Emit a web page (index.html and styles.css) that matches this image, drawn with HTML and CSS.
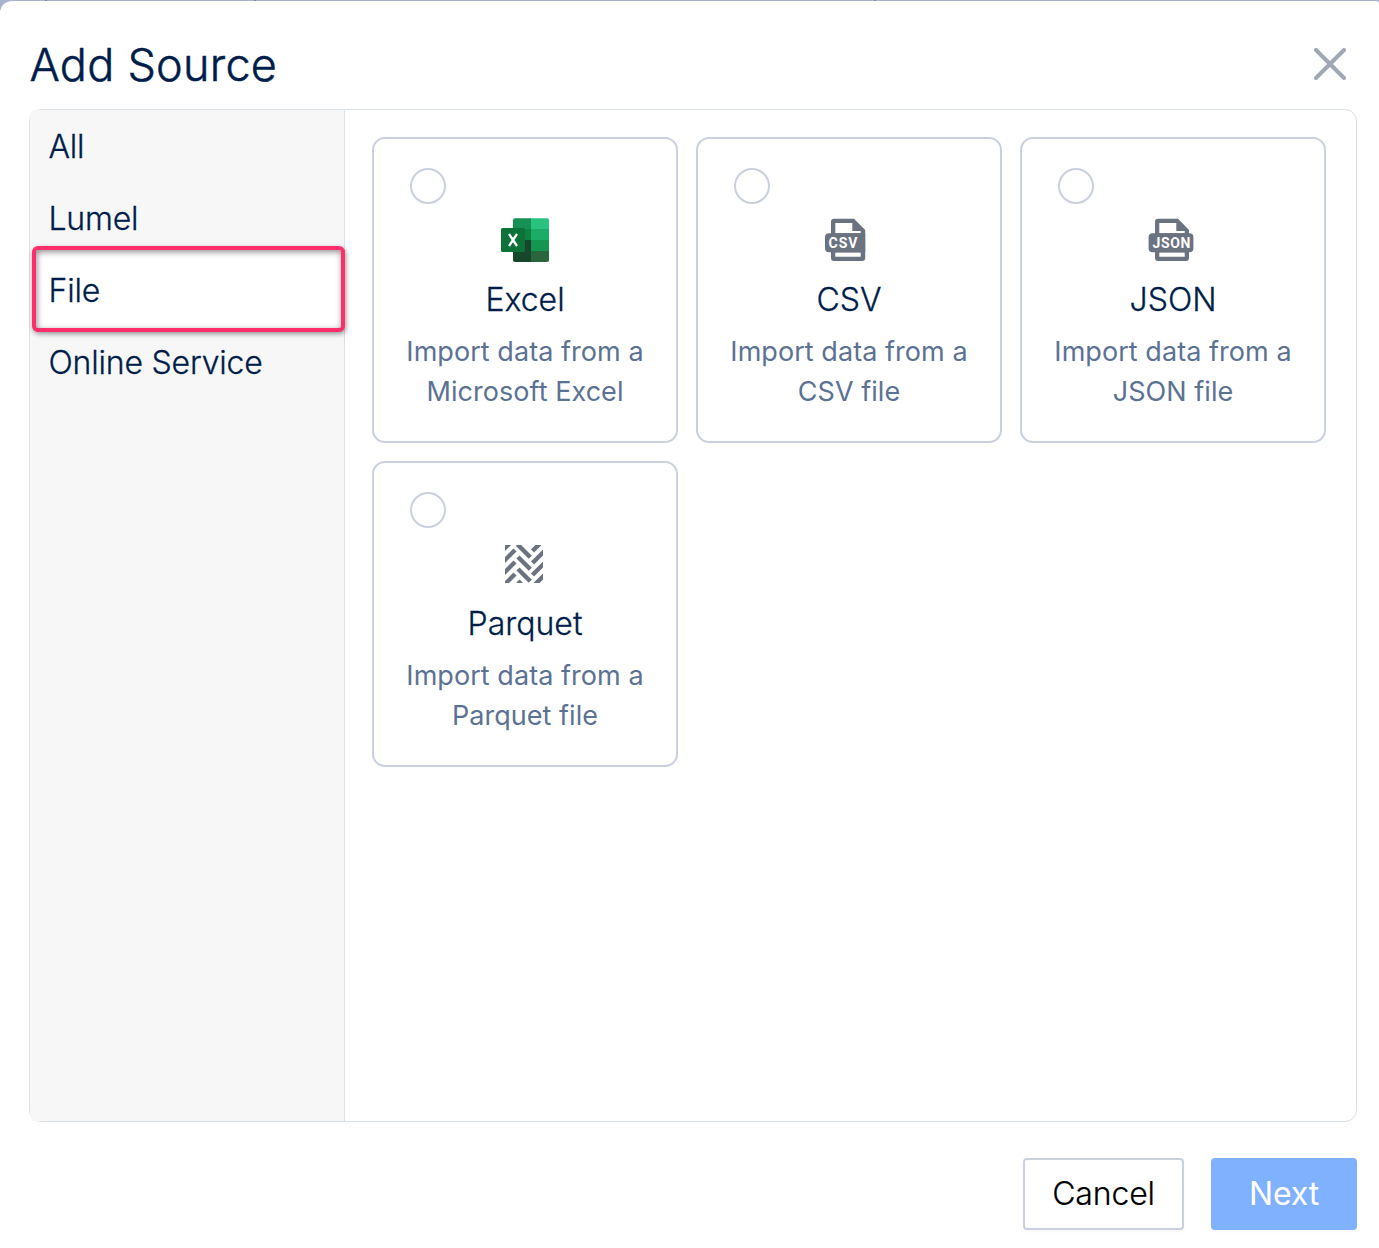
FILE: index.html
```html
<!DOCTYPE html>
<html lang="en">
<head>
<meta charset="utf-8">
<title>Add Source</title>
<link rel="stylesheet" href="styles.css">
</head>
<body>
<main class="dialog">
  <header class="dialog-header">
    <h1 class="title">Add Source</h1>
    <button class="close" aria-label="Close">
      <svg width="32" height="32" viewBox="0 0 32 32"><path d="M2 2 30 30M30 2 2 30" fill="none" stroke="#a0a7b5" stroke-width="4" stroke-linecap="round"/></svg>
    </button>
  </header>
  <section class="panel">
    <nav class="sidebar">
      <a class="nav-item">All</a>
      <a class="nav-item">Lumel</a>
      <a class="nav-item selected">File</a>
      <a class="nav-item">Online Service</a>
    </nav>
    <div class="cards">
      <article class="card">
        <span class="radio"></span>
        <svg class="icon" width="48" height="48" viewBox="0 0 48 48">
          <defs><clipPath id="sheet"><rect x="12" y="2.300" width="36" height="43.700" rx="2"/></clipPath></defs>
          <g clip-path="url(#sheet)">
            <path fill="#169154" d="M12 2h18v11H12z"/><path fill="#29c27f" d="M30 2h18v11H30z"/>
            <path fill="#108043" d="M12 13h18v11H12z"/><path fill="#1bad68" d="M30 13h18v11H30z"/>
            <path fill="#17472a" d="M12 24h18v22H12z"/><path fill="#149650" d="M30 24h18v11H30z"/>
            <path fill="#29653d" d="M30 35h18v11H30z"/>
          </g>
          <rect y="12" width="24" height="24" rx="1.6" fill="#0c7238"/>
          <path d="m8 18 8 12M16 18 8 30" stroke="#fff" stroke-width="2.3"/>
        </svg>
        <h2 class="name">Excel</h2>
        <p class="desc">Import data from a<br>Microsoft Excel</p>
      </article>
      <article class="card">
        <span class="radio"></span>
        <svg class="icon" width="48" height="48" viewBox="0 0 48 48">
          <path fill="#6b7280" fill-rule="evenodd" d="M9 2.700h20L40.200 14v28a3 3 0 0 1-3 3H9a3 3 0 0 1-3-3V5.700a3 3 0 0 1 3-3zM10.300 7v10.300h25.400V15h-8.400V7zM10.300 36.500v4.300h25.400v-4.300z"/>
          <path fill="#6b7280" d="M4 17.300h36.200v19H4a4 4 0 0 1-4-4v-11a4 4 0 0 1 4-4z"/>
          <text class="badge" x="3.500" y="32" textLength="29">CSV</text>
        </svg>
        <h2 class="name">CSV</h2>
        <p class="desc">Import data from a<br>CSV file</p>
      </article>
      <article class="card">
        <span class="radio"></span>
        <svg class="icon" width="48" height="48" viewBox="0 0 48 48">
          <path fill="#6b7280" fill-rule="evenodd" d="M9 2.700h20L40 14v28a3 3 0 0 1-3 3H9a3 3 0 0 1-3-3V5.700a3 3 0 0 1 3-3zM10.300 7v10.300h25.400V15h-8.400V7zM10.300 36.500v4.300h25.400v-4.300z"/>
          <rect x="-.4" y="17.300" width="44.800" height="19" rx="4" fill="#6b7280"/>
          <text class="badge" x="3.500" y="32" textLength="38">JSON</text>
        </svg>
        <h2 class="name">JSON</h2>
        <p class="desc">Import data from a<br>JSON file</p>
      </article>
      <article class="card">
        <span class="radio"></span>
        <svg class="icon" width="48" height="48" viewBox="0 0 48 48">
          <svg x="4" y="5" width="38" height="38" viewBox="0 0 38 38">
            <path fill="none" stroke="#6b7280" stroke-width="4.400" d="M-2 5 5-2M-2 17 10 5M-2 29 10 17M-2 41 10 29M12.500-.5 25.300 12.300M13 12 25.300 24.300M13 24 25.300 36.300M13 36l4 4M27.500 6 36-2.500M27.500 18 40 5.500M27.500 30 40 17.500M29 40.500 40 29.500"/>
          </svg>
        </svg>
        <h2 class="name">Parquet</h2>
        <p class="desc">Import data from a<br>Parquet file</p>
      </article>
    </div>
  </section>
  <footer class="actions">
    <button class="button cancel">Cancel</button>
    <button class="button next">Next</button>
  </footer>
</main>
</body>
</html>
```
FILE: styles.css
```css
* { box-sizing: border-box; }
body {
  margin: 0;
  height: 1248px;
  padding-top: 1px;
  overflow: hidden;
  font-family: Inter, "Liberation Sans", sans-serif;
  font-weight: 300;
  background: linear-gradient(90deg, #a9b3cb 45px, #7c859b 45px 47px, #a9b3cb 47px 254px, #7c859b 254px 256px, #a9b3cb 256px 874px, #7c859b 874px 876px, #a9b3cb 876px);
}
.dialog {
  height: 1247px;
  padding: 0 22px 18px 29px;
  display: flex;
  flex-direction: column;
  background: #fff;
  border-radius: 12px 3px 0 0;
}
.dialog-header {
  height: 108px;
  padding: 18px 11px 0 .5px;
  display: flex;
  align-items: center;
  justify-content: space-between;
}
.title {
  margin: 0;
  padding-top: 2px;
  font-size: 45px;
  line-height: 56px;
  font-weight: 300;
  letter-spacing: .25px;
  color: #001d4a;
  -webkit-text-stroke: .5px #001d4a;
}
.close { padding: 0; border: 0; background: none; display: flex; }
.panel {
  height: 1013px;
  display: flex;
  border: 1px solid #d8e1e8;
  border-radius: 12px;
}
.sidebar {
  width: 315px;
  padding-top: 1px;
  background: #f7f7f7;
  border-right: 1px solid #d8e1e8;
  border-radius: 6px 0 0 6px;
}
.nav-item {
  display: block;
  height: 72px;
  padding-left: 18.5px;
  font-size: 32px;
  line-height: 72px;
  letter-spacing: -.2px;
  color: #001d4a;
  -webkit-text-stroke: .3px #001d4a;
}
.nav-item.selected {
  height: 86px;
  margin: -9px -1px -5px 2px;
  padding: 5px 0 0 12.5px;
  position: relative;
  background: #fff;
  border: 4px solid #ff2d6b;
  border-radius: 6px;
  box-shadow: 1px 2px 5px rgba(0,0,0,.4), inset 1px 2px 6px rgba(0,0,0,.45);
}
.cards {
  padding: 27px;
  display: grid;
  grid-template-columns: repeat(3, 306px);
  grid-auto-rows: 306px;
  gap: 18px;
}
.card {
  padding: 29px 0 0;
  display: flex;
  flex-direction: column;
  align-items: center;
  border: 2px solid #cad0dd;
  border-radius: 13px;
}
.radio {
  width: 36px;
  height: 36px;
  margin-left: 36px;
  align-self: flex-start;
  border: 2px solid #cad0dd;
  border-radius: 50%;
}
.icon { margin-top: 12px; overflow: visible; }
.badge {
  font: 700 14px Roboto, sans-serif;
  fill: #fff;
}
.name {
  margin: 16px 0 12px;
  font-size: 32px;
  line-height: 40px;
  font-weight: 300;
  letter-spacing: 0;
  color: #001d4a;
  -webkit-text-stroke: .3px #001d4a;
}
.desc {
  margin: 0;
  font-size: 27px;
  line-height: 40px;
  font-weight: 400;
  letter-spacing: .05px;
  text-align: center;
  color: #5c7293;
}
.actions {
  margin-top: 36px;
  display: flex;
  justify-content: flex-end;
  gap: 27px;
}
.button {
  height: 72px;
  padding: 0 0 1px;
  font: 300 32px Inter, sans-serif;
  letter-spacing: -.15px;
  border-radius: 4px;
  box-shadow: 0 2px 3px rgba(0,0,0,.03);
}
.cancel { width: 161px; background: #fff; color: #000; border: 2px solid #cad0dd; -webkit-text-stroke: .2px #000; }
.next { width: 146px; background: #80b1ff; color: #fff; border: 0; font-weight: 400; }
```
